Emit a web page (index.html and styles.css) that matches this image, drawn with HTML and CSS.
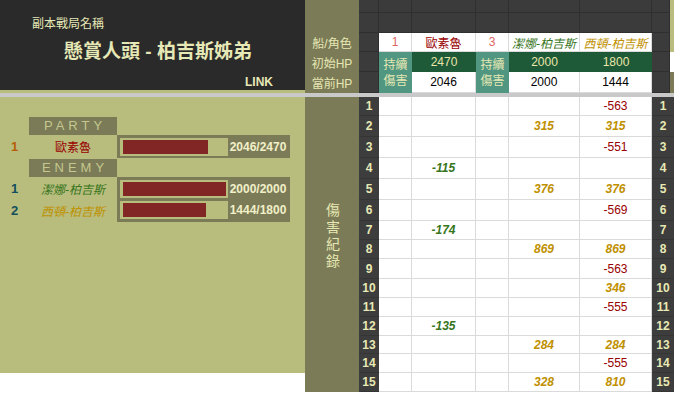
FILE: index.html
```html
<!DOCTYPE html>
<html lang="zh-Hant">
<head>
<meta charset="utf-8">
<link rel="stylesheet" href="styles.css">
</head>
<body>
<div class="page">
  <div class="left">
    <div class="head">
      <div class="sub">副本戰局名稱</div>
      <div class="title">懸賞人頭 - 柏吉斯姊弟</div>
      <div class="link">LINK</div>
    </div>
    <div class="strip-olive"></div>
    <div class="strip-grey"></div>
    <div class="panel">
      <div class="sec">PARTY</div>
      <div class="group">
        <div class="labels">
          <div class="lrow h23"><span class="num orange">1</span><span class="name red">歐素魯</span></div>
        </div>
        <div class="hpbox party">
          <div class="hprow"><div class="track"><div class="fill" style="width:82.8%"></div></div><span class="hptext">2046/2470</span></div>
        </div>
      </div>
      <div class="sec enemy">ENEMY</div>
      <div class="group">
        <div class="labels">
          <div class="lrow h22"><span class="num teal-t">1</span><span class="name grn-i">潔娜-柏吉斯</span></div>
          <div class="lrow h23"><span class="num teal-t">2</span><span class="name gold-i">西頓-柏吉斯</span></div>
        </div>
        <div class="hpbox">
          <div class="hprow"><div class="track"><div class="fill" style="width:100%"></div></div><span class="hptext">2000/2000</span></div>
          <div class="hprow"><div class="track"><div class="fill" style="width:80.2%"></div></div><span class="hptext">1444/1800</span></div>
        </div>
      </div>
    </div>
  </div>

  <div class="grid">
    <!-- header row 1 -->
    <div class="ol span2"></div>
    <div class="dk"></div><div class="dk"></div><div class="dk"></div><div class="dk"></div><div class="dk"></div><div class="dk"></div><div class="dk"></div>
    <div class="lo span3"></div>
    <!-- header row 2 -->
    <div class="dk"></div><div class="dk"></div><div class="dk"></div><div class="dk"></div><div class="dk"></div><div class="dk"></div><div class="dk"></div>
    <!-- row 3 -->
    <div class="ol lbl">船/角色</div>
    <div class="dk"></div>
    <div class="w pink">1</div>
    <div class="w red">歐素魯</div>
    <div class="w pink">3</div>
    <div class="w grn-i">潔娜-柏吉斯</div>
    <div class="w gold-i">西頓-柏吉斯</div>
    <div class="dk"></div>
    <!-- row 4 -->
    <div class="ol lbl">初始HP</div>
    <div class="dk"></div>
    <div class="teal span2">持續<br>傷害</div>
    <div class="g">2470</div>
    <div class="teal span2">持續<br>傷害</div>
    <div class="g">2000</div>
    <div class="g">1800</div>
    <div class="dk"></div>
    <div class="wh"></div>
    <!-- row 5 -->
    <div class="ol lbl">當前HP</div>
    <div class="dk"></div>
    <div class="w">2046</div>
    <div class="w">2000</div>
    <div class="w">1444</div>
    <div class="dk"></div>
    <div class="dol"></div>
    <!-- separator -->
    <div class="sep"></div>
    <!-- data -->
    <div class="ol vlabel"><span class="vtext">傷害紀錄</span></div>

    <div class="n">1</div><div class="w"></div><div class="w"></div><div class="w"></div><div class="w"></div><div class="w red">-563</div><div class="n n2">1</div>
    <div class="n">2</div><div class="w"></div><div class="w"></div><div class="w"></div><div class="w gold">315</div><div class="w gold">315</div><div class="n n2">2</div>
    <div class="n">3</div><div class="w"></div><div class="w"></div><div class="w"></div><div class="w"></div><div class="w red">-551</div><div class="n n2">3</div>
    <div class="n">4</div><div class="w"></div><div class="w grn">-115</div><div class="w"></div><div class="w"></div><div class="w"></div><div class="n n2">4</div>
    <div class="n">5</div><div class="w"></div><div class="w"></div><div class="w"></div><div class="w gold">376</div><div class="w gold">376</div><div class="n n2">5</div>
    <div class="n">6</div><div class="w"></div><div class="w"></div><div class="w"></div><div class="w"></div><div class="w red">-569</div><div class="n n2">6</div>
    <div class="n">7</div><div class="w"></div><div class="w grn">-174</div><div class="w"></div><div class="w"></div><div class="w"></div><div class="n n2">7</div>
    <div class="n">8</div><div class="w"></div><div class="w"></div><div class="w"></div><div class="w gold">869</div><div class="w gold">869</div><div class="n n2">8</div>
    <div class="n">9</div><div class="w"></div><div class="w"></div><div class="w"></div><div class="w"></div><div class="w red">-563</div><div class="n n2">9</div>
    <div class="n">10</div><div class="w"></div><div class="w"></div><div class="w"></div><div class="w"></div><div class="w gold">346</div><div class="n n2">10</div>
    <div class="n">11</div><div class="w"></div><div class="w"></div><div class="w"></div><div class="w"></div><div class="w red">-555</div><div class="n n2">11</div>
    <div class="n">12</div><div class="w"></div><div class="w grn">-135</div><div class="w"></div><div class="w"></div><div class="w"></div><div class="n n2">12</div>
    <div class="n">13</div><div class="w"></div><div class="w"></div><div class="w"></div><div class="w gold">284</div><div class="w gold">284</div><div class="n n2">13</div>
    <div class="n">14</div><div class="w"></div><div class="w"></div><div class="w"></div><div class="w"></div><div class="w red">-555</div><div class="n n2">14</div>
    <div class="n">15</div><div class="w"></div><div class="w"></div><div class="w"></div><div class="w gold">328</div><div class="w gold">810</div><div class="n n2">15</div>
  </div>
</div>
</body>
</html>
```

FILE: styles.css
```css
html, body {
  margin: 0;
  padding: 0;
  background: #ffffff;
}
body {
  width: 674px;
  height: 393px;
  overflow: hidden;
  font-family: "Liberation Sans", "Noto Sans CJK TC", sans-serif;
  font-size: 12px;
}
.page {
  display: flex;
  align-items: flex-start;
}

/* ---------- left ---------- */
.left {
  width: 305px;
  display: flex;
  flex-direction: column;
}
.head {
  height: 90px;
  background: #2a2a2a;
  color: #e6e8b6;
  display: flex;
  flex-direction: column;
}
.sub {
  margin-top: 16px;
  padding-left: 32px;
  font-size: 12px;
  line-height: 16px;
}
.title {
  margin-top: 8px;
  padding-left: 11px;
  text-align: center;
  font-size: 19px;
  font-weight: bold;
  line-height: 24px;
}
.link {
  margin-top: 10px;
  padding-right: 32px;
  text-align: right;
  font-size: 12px;
  font-weight: bold;
  line-height: 16px;
}
.strip-olive {
  height: 3px;
  background: #b8bd7e;
}
.strip-grey {
  height: 4px;
  background: #c9c9c9;
}
.panel {
  height: 276px;
  box-sizing: border-box;
  padding-top: 20px;
  background: #b8bd7e;
}
.sec {
  margin-left: 29px;
  width: 88px;
  height: 18px;
  box-sizing: border-box;
  padding-left: 4px;
  background: #7b7b57;
  color: #c4c88e;
  font-size: 13px;
  line-height: 18px;
  letter-spacing: 4px;
  text-align: center;
}
.sec.enemy {
  margin-top: 1px;
}
.group {
  display: flex;
}
.labels {
  width: 117px;
}
.lrow {
  display: flex;
  align-items: center;
}
.h22 { height: 22px; }
.h23 { height: 23px; }
.num {
  width: 29px;
  text-align: center;
  font-weight: bold;
  font-size: 13px;
}
.name {
  width: 88px;
  text-align: center;
  font-size: 12px;
}
.orange { color: #b45f06; }
.teal-t { color: #134f5c; }
.hpbox {
  width: 173px;
  box-sizing: border-box;
  padding: 3px 2px 3px 3px;
  background: #7b7b57;
  display: flex;
  flex-direction: column;
  gap: 3px;
}
.hpbox.party {
  padding-bottom: 2px;
}
.hprow {
  display: flex;
  align-items: center;
  height: 18px;
}
.track {
  width: 108px;
  height: 18px;
  box-sizing: border-box;
  padding: 2px 2px 2px 3px;
  background: #b8bd7e;
}
.fill {
  height: 100%;
  background: #812525;
}
.hptext {
  flex: 1;
  text-align: center;
  font-weight: bold;
  font-size: 12px;
  color: #f1f0c8;
}

/* ---------- right grid ---------- */
.grid {
  width: 369px;
  display: grid;
  grid-template-columns: 54px 20px 33px 64px 33px 71px 72px 18px 4px;
  grid-template-rows:
    13px 20px 19px 20px 21px 4px
    19px 21px 21px 21px 21px 21px 19px 19px 20px 19px 19px 19px 18px 19px 19px;
}
.grid > div {
  box-sizing: border-box;
  display: flex;
  align-items: center;
  justify-content: center;
  font-size: 12px;
  min-width: 0;
  white-space: nowrap;
}
.span2 { grid-row: span 2; }
.span3 { grid-row: span 3; }
.ol {
  background: #7b7b57;
  color: #e6e7b2;
}
.lbl {
  font-size: 12px;
}
.lo { background: #b8bd7e; }
.wh { background: #ffffff; }
.dol { background: #7b7b57; }
.dk {
  background: #3b3b3b;
  border-right: 1px solid #2f2f2f;
  border-bottom: 1px solid #2f2f2f;
}
.w {
  background: #ffffff;
  color: #000000;
  border-right: 1px solid #dadada;
  border-bottom: 1px solid #dadada;
}
.teal {
  background: #519680;
  color: #e6e8b4;
  font-size: 12px;
  line-height: 16px;
  text-align: center;
  white-space: normal !important;
}
.g {
  background: #1f5a38;
  color: #e9e6a8;
}
.sep {
  grid-column: 1 / -1;
  background: #c9c9c9;
}
.vlabel {
  grid-column: 1;
  grid-row: 7 / span 15;
  align-items: flex-start !important;
  padding-top: 105px;
}
.vtext {
  display: block;
  width: 14px;
  font-size: 14px;
  line-height: 17px;
  white-space: normal;
  word-break: break-all;
  color: #e6e7b2;
  margin-left: 2px;
}
.n {
  background: #3d3d3d;
  color: #e8e9b4;
  font-weight: bold;
  border-bottom: 1px solid #353535;
}
.n2 {
  grid-column: 8 / span 2;
}

.pink { color: #e06666 !important; }
.red { color: #990000 !important; }
.grn-i { color: #38761d !important; font-style: italic; }
.gold-i { color: #bf9000 !important; font-style: italic; }
.gold { color: #bf9000 !important; font-style: italic; font-weight: bold; }
.grn { color: #38761d !important; font-style: italic; font-weight: bold; }
```
